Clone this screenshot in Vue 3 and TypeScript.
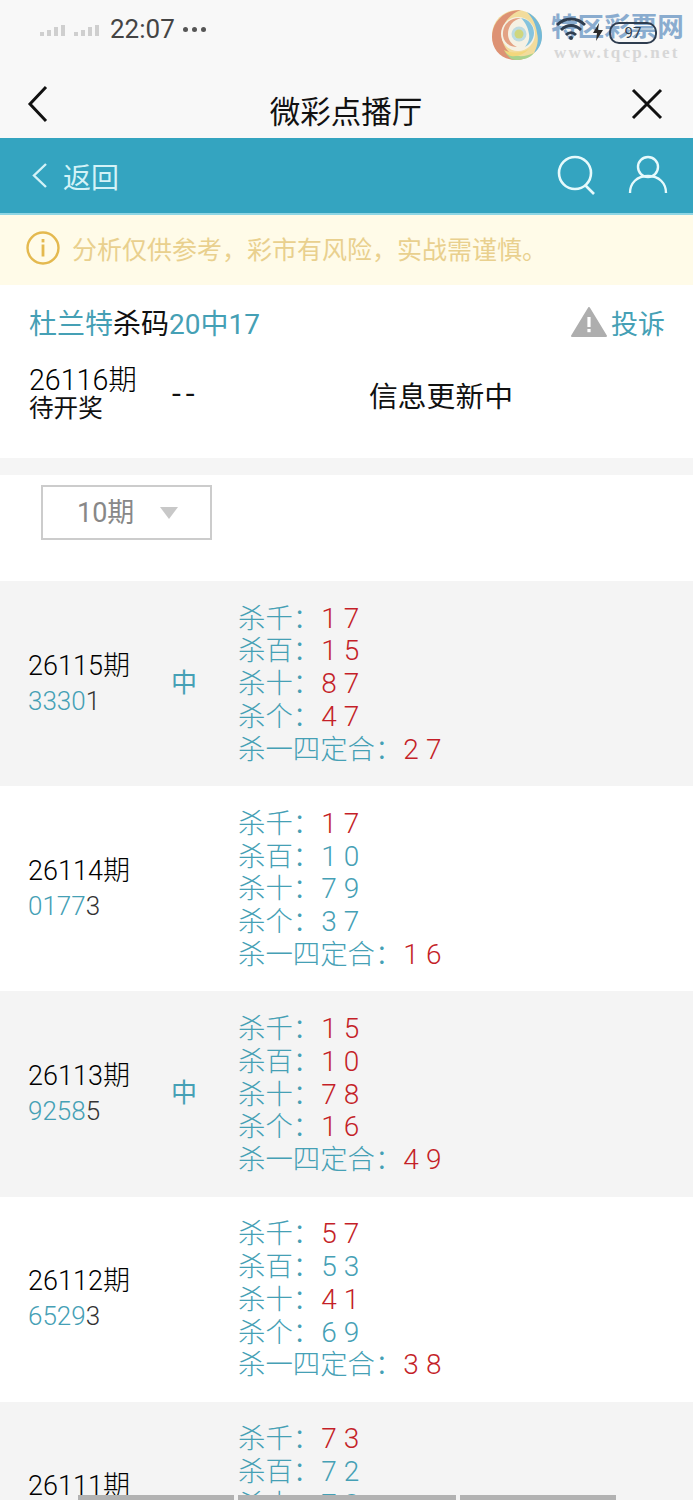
<script setup lang="ts">
interface Kill {
  label: string
  digits: string
  hit: boolean
}

interface Row {
  issue: string
  open: string
  last: string
  won: boolean
  kills: Kill[]
}

const names = ['杀千', '杀百', '杀十', '杀个', '杀一四定合']

function kills(values: [string, boolean][]): Kill[] {
  return values.map(([digits, hit], i) => ({ label: names[i], digits, hit }))
}

const rows: Row[] = [
  {
    issue: '26115期',
    open: '3330',
    last: '1',
    won: true,
    kills: kills([['17', true], ['15', true], ['87', true], ['47', true], ['27', true]]),
  },
  {
    issue: '26114期',
    open: '0177',
    last: '3',
    won: false,
    kills: kills([['17', true], ['10', false], ['79', false], ['37', false], ['16', true]]),
  },
  {
    issue: '26113期',
    open: '9258',
    last: '5',
    won: true,
    kills: kills([['15', true], ['10', true], ['78', true], ['16', true], ['49', true]]),
  },
  {
    issue: '26112期',
    open: '6529',
    last: '3',
    won: false,
    kills: kills([['57', true], ['53', false], ['41', true], ['69', false], ['38', true]]),
  },
  {
    issue: '26111期',
    open: '',
    last: '',
    won: false,
    kills: kills([['73', true], ['72', false], ['78', false], ['', false], ['', false]]),
  },
]
</script>

<template>
  <div class="page">
    <div class="top">
      <div class="status">
        <svg class="signal" width="62" height="14" viewBox="0 0 62 14">
          <g fill="#cfcfcf">
            <rect x="0" y="9" width="4" height="4" />
            <rect x="7" y="7" width="4" height="6" />
            <rect x="14" y="4" width="4" height="9" />
            <rect x="21" y="2" width="4" height="11" />
            <rect x="34" y="9" width="4" height="4" />
            <rect x="41" y="7" width="4" height="6" />
            <rect x="48" y="4" width="4" height="9" />
            <rect x="55" y="2" width="4" height="11" />
          </g>
        </svg>
        <span class="clock">22:07</span>
        <span class="dots">
          <i></i>
          <i></i>
          <i></i>
        </span>
      </div>
      <div class="nav">
        <svg width="22" height="38" viewBox="0 0 22 38">
          <path d="M19 2 3 19l16 17" fill="none" stroke="#111" stroke-width="3" />
        </svg>
        <span class="nav__title">微彩点播厅</span>
        <svg width="32" height="32" viewBox="0 0 32 32">
          <path d="M2 2l28 28M30 2 2 30" fill="none" stroke="#111" stroke-width="3" />
        </svg>
      </div>
    </div>

    <div class="bar">
      <div class="bar__back">
        <svg width="17" height="27" viewBox="0 0 17 27">
          <path d="M15 2 3 13.5 15 25" fill="none" stroke="#d3f2f7" stroke-width="2.4" />
        </svg>
        <span>返回</span>
      </div>
      <div class="bar__icons">
        <svg width="40" height="41" viewBox="0 0 40 41">
          <circle cx="18" cy="18" r="16" fill="none" stroke="#e6fafc" stroke-width="2.6" />
          <path d="M28 30l9 9" fill="none" stroke="#e6fafc" stroke-width="2.6" />
        </svg>
        <svg width="40" height="40" viewBox="0 0 40 40">
          <circle cx="20" cy="12" r="10" fill="none" stroke="#e6fafc" stroke-width="2.4" />
          <path d="M2 38c0-10 7-17 18-17s18 7 18 17" fill="none" stroke="#e6fafc" stroke-width="2.4" />
        </svg>
      </div>
    </div>

    <div class="notice">
      <svg width="34" height="34" viewBox="0 0 34 34">
        <circle cx="17" cy="17" r="15.5" fill="none" stroke="#e4b94f" stroke-width="2.4" />
        <rect x="15.6" y="8" width="2.8" height="3.4" fill="#e4b94f" />
        <rect x="15.6" y="13.5" width="2.8" height="12" fill="#e4b94f" />
      </svg>
      <span>分析仅供参考，彩市有风险，实战需谨慎。</span>
    </div>

    <section class="summary">
      <div class="summary__head">
        <div class="summary__name">
          <span class="teal">杜兰特</span>杀码<span class="teal">20中17</span>
        </div>
        <div class="report">
          <svg width="36" height="30" viewBox="0 0 36 30">
            <path d="M18 1 35 29H1z" fill="#aeaeae" stroke="#aeaeae" stroke-linejoin="round" stroke-width="2" />
            <rect x="16.4" y="10" width="3.2" height="10" fill="#fff" />
            <rect x="16.4" y="22" width="3.2" height="3.2" fill="#fff" />
          </svg>
          <span class="teal">投诉</span>
        </div>
      </div>
      <div class="summary__body">
        <div class="summary__issue">
          <div class="summary__no">26116期</div>
          <div class="summary__state">待开奖</div>
        </div>
        <div class="summary__dash">--</div>
        <div class="summary__info">信息更新中</div>
      </div>
    </section>

    <div class="band"></div>

    <div class="filter">
      <div class="select">
        <span class="select__text">10期</span>
        <i class="select__arrow"></i>
      </div>
    </div>

    <div class="list">
      <div v-for="(row, i) in rows" :key="row.issue" class="row" :class="{ 'row--odd': i % 2 === 0 }">
        <div>
          <div class="row__issue">{{ row.issue }}</div>
          <div class="row__open">
            <span class="teal">{{ row.open }}</span>{{ row.last }}
          </div>
        </div>
        <div class="row__won">{{ row.won ? '中' : '' }}</div>
        <div class="row__kills">
          <div v-for="kill in row.kills" :key="kill.label" class="kill">
            {{ kill.label }}：<span class="kill__digits" :class="{ 'kill__digits--hit': kill.hit }">{{ kill.digits }}</span>
          </div>
        </div>
      </div>
    </div>

    <div class="watermark">
      <svg class="watermark__logo" width="52" height="52" viewBox="0 0 52 52">
        <ellipse cx="26" cy="26" rx="25" ry="25" fill="#f2dc9c" />
        <path d="M30 1C12 1 1 14 1 28c0 13 10 23 24 23 4 0 8-1 11-3-12 2-24-6-25-20C10 16 18 5 30 1z" fill="#dd9274" />
        <path d="M36 3c10 5 15 14 15 24 0 7-3 13-8 17 3-6 5-12 3-20-1-9-5-16-10-21z" fill="#72b9d9" />
        <path d="M13 41c8 7 20 8 30 3-4 5-11 7-18 7-5 0-9-4-12-10z" fill="#a9d28e" />
        <path d="M13 41c8 4 18 3 25-1-6 6-12 8-18 7-3-1-5-3-7-6z" fill="#f3d77c" />
        <circle cx="27" cy="25" r="17" fill="#f5f1e4" />
        <path d="M12 27C11 15 20 8 30 9c-8 2-13 8-13 16 0 6 4 11 9 13-8 0-13-5-14-11z" fill="#e3a284" />
        <path d="M30 9c8 1 13 8 13 15s-5 12-9 14c3-4 5-8 4-13-1-7-4-12-8-16z" fill="#85c3dd" />
        <circle cx="28" cy="25" r="7.5" fill="#bcdbe2" />
        <circle cx="28" cy="25" r="4.5" fill="#cfd67e" />
      </svg>
      <div class="watermark__text">
        <div class="watermark__name">特区彩票网</div>
        <div class="watermark__url">www.tqcp.net</div>
      </div>
      <div class="watermark__status">
        <svg width="30" height="24" viewBox="0 0 30 24">
          <path d="M1 8c8-8 20-8 28 0M5 13c6-6 14-6 20 0M10 18c3-3 7-3 10 0" fill="none" stroke="#2f3d4f" stroke-width="2.8" />
          <circle cx="15" cy="21" r="2" fill="#2f3d4f" />
        </svg>
        <svg class="watermark__bolt" width="10" height="18" viewBox="0 0 10 18">
          <path d="M6 0 0 10h4l-1 8 7-11H5z" fill="#2b2b2b" />
        </svg>
        <div class="watermark__battery">97</div>
      </div>
    </div>

    <div class="dock">
      <i class="dock__a"></i>
      <i class="dock__b"></i>
      <i class="dock__a"></i>
    </div>
  </div>
</template>

<style scoped>
.page {
  position: relative;
  width: 693px;
  height: 1500px;
  overflow: hidden;
  background: #fff;
  color: #111;
  font-family: Roboto, "Noto Sans CJK SC", sans-serif;
}

.teal {
  color: #45a0b5;
}

.top {
  height: 138px;
  background: #f8f8f8;
}

.status {
  display: flex;
  align-items: center;
  height: 58px;
  padding-left: 40px;
}

.signal {
  margin-top: 2px;
}

.clock {
  margin-left: 8px;
  color: #444;
  font-size: 26px;
}

.dots {
  display: flex;
  gap: 4px;
  margin-left: 8px;
}

.dots i {
  width: 5px;
  height: 5px;
  border-radius: 50%;
  background: #555;
}

.nav {
  display: flex;
  align-items: center;
  justify-content: space-between;
  height: 80px;
  padding: 12px 30px 0 27px;
  box-sizing: border-box;
}

.nav__title {
  margin: 18px 0 0 12px;
  font-size: 30.5px;
  line-height: 40px;
}

.bar {
  display: flex;
  align-items: center;
  justify-content: space-between;
  height: 77px;
  padding: 0 25px 0 31px;
  box-sizing: border-box;
  background: #34a4c0;
  border-bottom: 2px solid #8fd6e4;
}

.bar__back {
  display: flex;
  align-items: center;
  gap: 15px;
  color: #d3f2f7;
  font-size: 28px;
}

.bar__icons {
  display: flex;
  gap: 31px;
}

.notice {
  display: flex;
  align-items: center;
  gap: 12px;
  height: 70px;
  padding: 0 0 5px 26px;
  box-sizing: border-box;
  background: #fffbe8;
  color: #e9d08e;
  font-size: 25px;
}

.summary {
  height: 173px;
  padding: 0 28px 0 29px;
  box-sizing: border-box;
}

.summary__head {
  display: flex;
  align-items: center;
  justify-content: space-between;
  height: 77px;
  padding-bottom: 3px;
  box-sizing: border-box;
}

.summary__name {
  font-size: 28px;
}

.report {
  display: flex;
  align-items: center;
  gap: 4px;
  font-size: 27px;
}

.summary__body {
  display: flex;
  align-items: center;
  height: 62px;
}

.summary__issue {
  width: 139px;
}

.summary__no {
  font-size: 28.6px;
  font-weight: 300;
  color: #000;
  line-height: 32px;
}

.summary__state {
  font-size: 24.6px;
  line-height: 26px;
}

.summary__dash {
  width: 201px;
  padding-top: 2px;
  font-family: "Liberation Mono", monospace;
  font-size: 28px;
  letter-spacing: -3px;
}

.summary__info {
  padding-top: 2px;
  font-size: 28.8px;
}

.band {
  height: 17px;
  background: #f5f5f5;
}

.filter {
  height: 106px;
  padding: 10px 0 0 41px;
  box-sizing: border-box;
}

.select {
  display: flex;
  align-items: center;
  gap: 26px;
  width: 171px;
  height: 55px;
  padding-left: 34px;
  box-sizing: border-box;
  border: 2px solid #ccc;
  color: #888;
  font-size: 27px;
}

.select__text {
  margin-top: -4px;
}

.select__arrow {
  width: 0;
  height: 0;
  border-left: 9px solid transparent;
  border-right: 9px solid transparent;
  border-top: 12px solid #c8c8c8;
}

.row {
  display: grid;
  grid-template-columns: 144px 66px 1fr;
  align-items: center;
  height: 205.2px;
  padding-left: 28px;
  box-sizing: border-box;
}

.row--odd {
  background: #f4f4f4;
}

.row__issue {
  color: #000;
  font-size: 27px;
  font-weight: 300;
  line-height: 35px;
}

.row__open {
  min-height: 35px;
  color: #333;
  font-size: 26px;
  font-weight: 300;
  line-height: 35px;
}

.row__won {
  margin: -6px 0 0 -1px;
  color: #45a0b5;
  font-size: 26px;
}

.row__kills {
  padding-top: 2px;
}

.kill {
  color: #45a0b5;
  font-size: 27.4px;
  font-weight: 300;
  line-height: 32.8px;
  white-space: nowrap;
}

.kill__digits {
  margin-left: 1px;
  font-size: 28px;
  letter-spacing: 7px;
}

.kill__digits--hit {
  color: #c41f28;
}

.watermark {
  position: absolute;
  top: 9px;
  left: 491px;
  display: flex;
  gap: 8px;
}

.watermark__text {
  opacity: 0.8;
}

.watermark__name {
  color: #6f9ac6;
  font-size: 26.6px;
  font-weight: 700;
  line-height: 36px;
  white-space: nowrap;
}

.watermark__url {
  margin-left: 3px;
  color: #d0d0d0;
  font-family: "Liberation Serif", serif;
  font-size: 17px;
  font-weight: 700;
  line-height: 16px;
  letter-spacing: 2.2px;
  white-space: nowrap;
}

.watermark__status {
  position: absolute;
  top: 8px;
  left: 65px;
  display: flex;
  align-items: flex-start;
  gap: 7px;
}

.watermark__bolt {
  margin-top: 6px;
}

.watermark__battery {
  width: 48px;
  height: 22px;
  margin: 5px 0 0 -1px;
  border: 2px solid #2f3d4f;
  border-radius: 10px;
  box-sizing: border-box;
  color: #2f3d4f;
  font-size: 15px;
  line-height: 18px;
  text-align: center;
}

.dock {
  position: absolute;
  bottom: 0;
  left: 78px;
  display: flex;
  gap: 4px;
  height: 5px;
}

.dock i {
  background: #b2b2b2;
}

.dock__a {
  width: 156px;
}

.dock__b {
  width: 218px;
}
</style>
